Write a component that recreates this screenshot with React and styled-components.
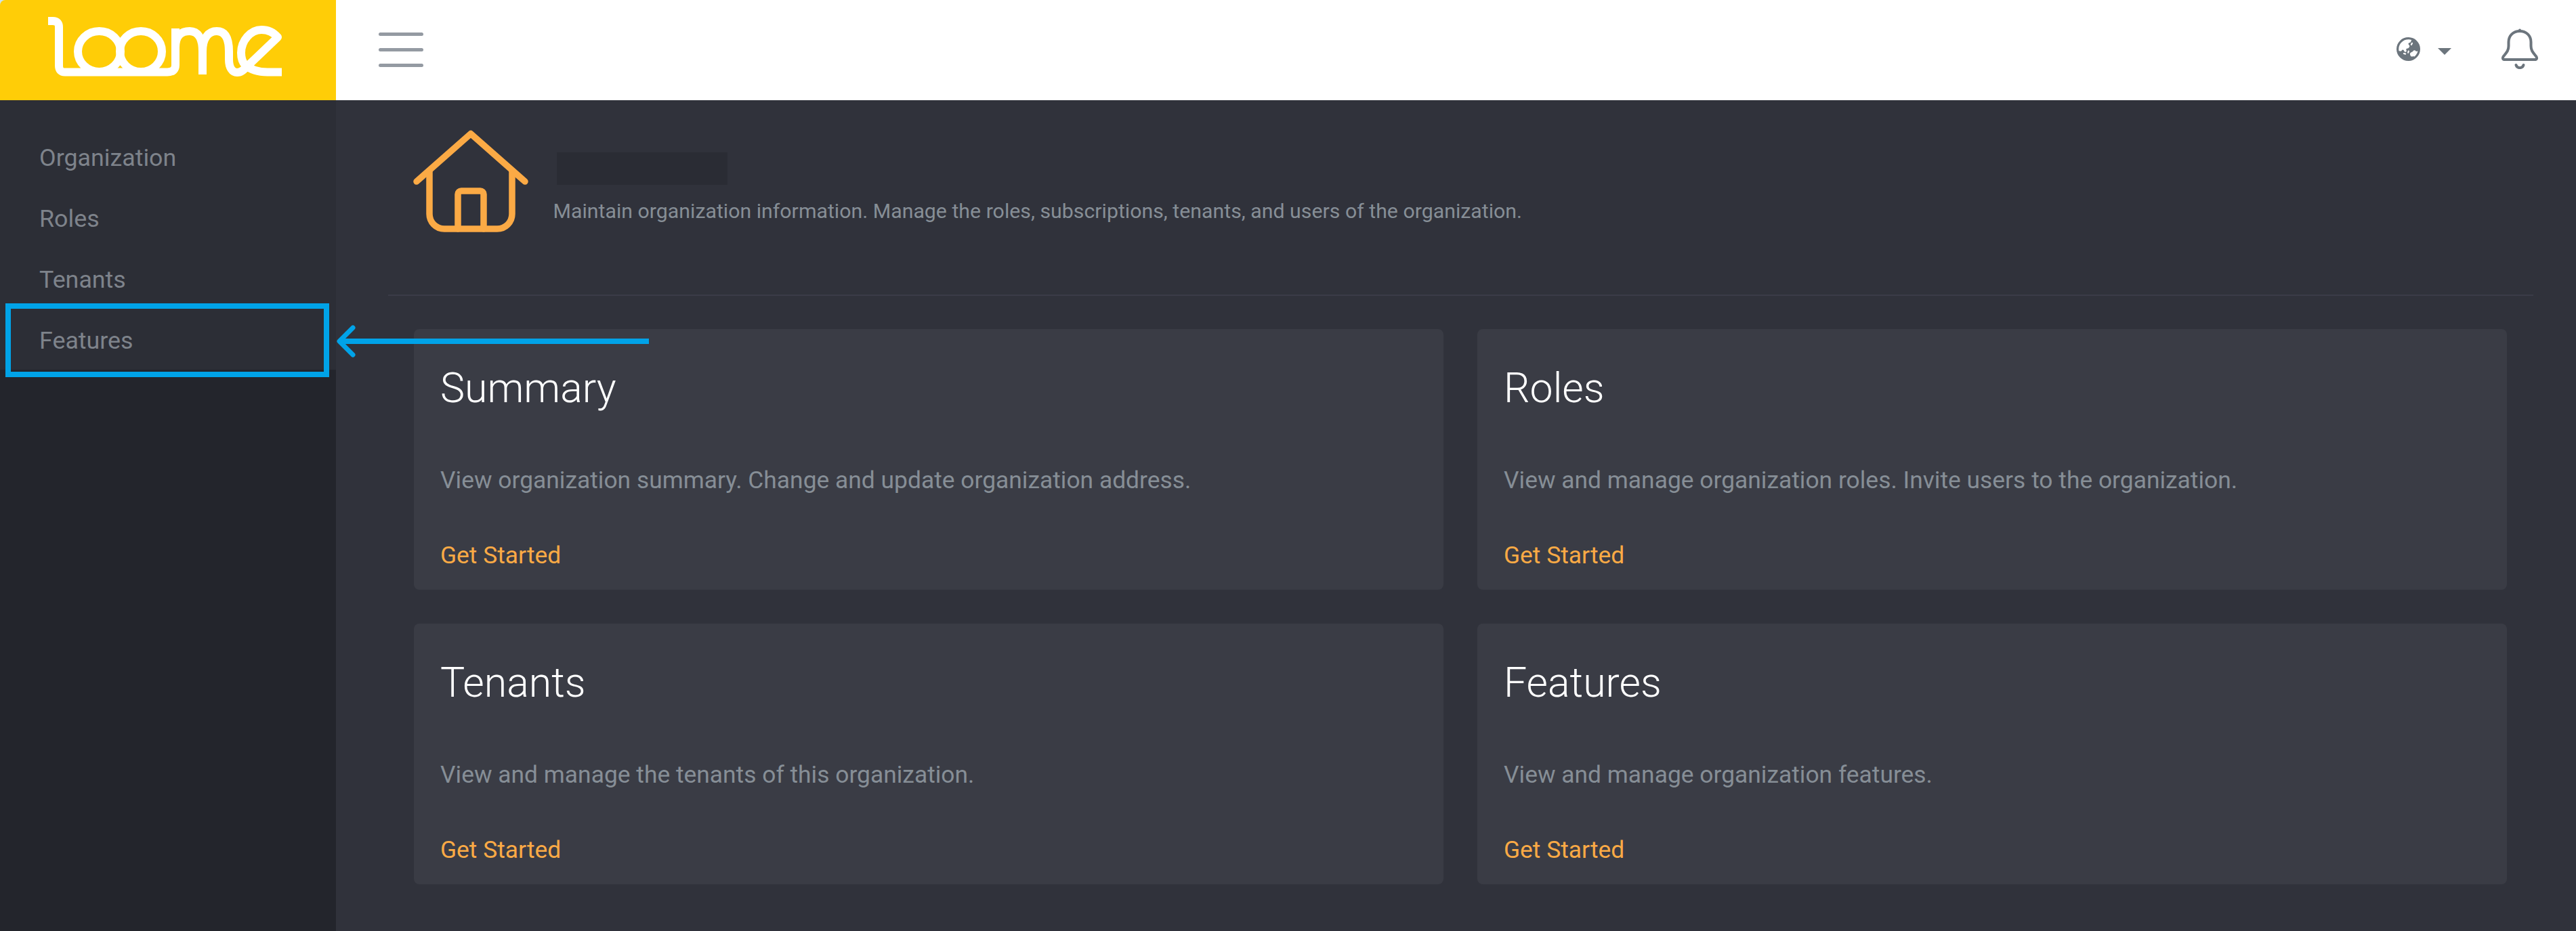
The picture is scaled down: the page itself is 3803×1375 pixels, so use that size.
import React from 'react';
import styled, { createGlobalStyle } from 'styled-components';
import { FaEarthAsia } from 'react-icons/fa6';

const Global = createGlobalStyle`
  html, body { margin: 0; padding: 0; background: #30323b; }
  body { font-family: Roboto, "Liberation Sans", sans-serif; overflow: hidden; }
  * { box-sizing: border-box; }
`;

const Page = styled.div`
  position: relative;
  width: 3803px;
  height: 1375px;
  display: grid;
  grid-template-columns: 496px 1fr;
  grid-template-rows: 148px 1fr;
  overflow: hidden;
  background: #cde4ee;
`;

const Brand = styled.div`
  background: #ffcd07;
  border-top-left-radius: 8px;
  padding: 25px 0 0 71px;
`;

const LogoMark = styled.svg`
  display: block;
  width: 345px;
  height: 88px;
`;

const TopBar = styled.header`
  background: #fff;
  display: flex;
  align-items: center;
  justify-content: space-between;
  padding: 0 56px 0 63px;
`;

const MenuButton = styled.button`
  display: flex;
  flex-direction: column;
  gap: 18px;
  width: 66px;
  padding: 0;
  margin: 0 0 2px;
  border: 0;
  background: none;
`;

const MenuBar = styled.span`
  display: block;
  height: 5px;
  border-radius: 3px;
  background: #949aa2;
`;

const TopActions = styled.div`
  display: flex;
  align-items: center;
`;

const GlobeIcon = styled(FaEarthAsia)`
  display: block;
  width: 35px;
  height: 35px;
  color: #6c757d;
  margin-bottom: 3px;
`;

const Caret = styled.span`
  width: 0;
  height: 0;
  margin: 4px 74px 0 26px;
  border-left: 10px solid transparent;
  border-right: 10px solid transparent;
  border-top: 10px solid #6c757d;
`;

const Bell = styled.svg`
  display: block;
  width: 54px;
  height: 60px;
  margin-top: -4px;
`;

const Sidebar = styled.nav`
  background: #23252c;
`;

const NavList = styled.div`
  padding-top: 40px;
  height: 398px;
  background: #2c2e36;
`;

const NavItem = styled.a`
  display: flex;
  align-items: center;
  height: 90px;
  padding-left: 58px;
  font-size: 35.8px;
  color: #7e838b;
`;

const Main = styled.main`
  padding: 0 63px 0 77px;
  background: #30323b;
`;

const PageHead = styled.section`
  display: flex;
  height: 289px;
  padding: 45px 0 0 37px;
  border-bottom: 2px solid #3b3c48;
`;

const HouseIcon = styled.svg`
  display: block;
  width: 170px;
  height: 150px;
  flex: none;
  overflow: visible;
`;

const HeadText = styled.div`
  padding: 32px 0 0 36.5px;
`;

const Redacted = styled.div`
  width: 252px;
  height: 48px;
  margin-left: 5.5px;
  background: #2a2c34;
`;

const Lead = styled.p`
  margin: 21px 0 0;
  font-size: 30.3px;
  line-height: 36px;
  color: #868e96;
  white-space: nowrap;
`;

const CardGrid = styled.section`
  display: grid;
  grid-template-columns: 1520px 1520px;
  grid-auto-rows: 385px;
  column-gap: 50px;
  row-gap: 50px;
  margin: 49px 0 0 38px;
`;

const Card = styled.article`
  display: flex;
  flex-direction: column;
  padding: 52px 39px 0;
  border-radius: 8px;
  background: #3a3c45;
`;

const CardTitle = styled.h3`
  margin: 0;
  font-size: 60.8px;
  line-height: 72px;
  font-weight: 300;
  color: #fff;
`;

const CardText = styled.p`
  margin: 78px 0 0;
  font-size: 35.4px;
  line-height: 42px;
  color: #868e96;
`;

const CardLink = styled.a`
  margin-top: 69px;
  font-size: 35.4px;
  line-height: 42px;
  color: #fbaa45;
`;

const Highlight = styled.div`
  position: absolute;
  left: 8px;
  top: 448px;
  width: 478px;
  height: 109px;
  border: 8px solid #00a3e8;
`;

const Pointer = styled.svg`
  position: absolute;
  left: 490px;
  top: 474px;
  width: 475px;
  height: 60px;
`;

const cards = [
  ['Summary', 'View organization summary. Change and update organization address.'],
  ['Roles', 'View and manage organization roles. Invite users to the organization.'],
  ['Tenants', 'View and manage the tenants of this organization.'],
  ['Features', 'View and manage organization features.'],
];

export default function App() {
  return (
    <Page>
      <Global />
      <Brand>
        <LogoMark viewBox="71 25 345 88" fill="none" stroke="#fff" strokeWidth="12">
          <path d="M71 31 H78 Q87 31 87 40 V97 Q87 106.5 96 106.5 H247 Q259 106.5 259 96 V42" />
          <ellipse cx="146.5" cy="76" rx="31.5" ry="30" />
          <ellipse cx="208" cy="76" rx="31" ry="30" />
          <path d="M259 70 C259 52 268 46 280 46 C292 46 299 56 299 76 V110" />
          <path d="M299 76 C299 56 308 46 320 46 C332 46 338 56 338 76 V88 C338 100 343 107 350 107 C356 107 360 103 366 97 L410 55 C404 48 396 44 386 44 C370 44 356 60 356 78 C356 86 358 92 362 96 C370 103 380 106.5 395 106.5 H416" strokeLinejoin="round" />
        </LogoMark>
      </Brand>
      <TopBar>
        <MenuButton aria-label="Menu">
          <MenuBar />
          <MenuBar />
          <MenuBar />
        </MenuButton>
        <TopActions>
          <GlobeIcon />
          <Caret />
          <Bell viewBox="0 0 54 60" fill="none" stroke="#6c757d" strokeWidth="4">
            <path d="M27 4 C17 4 10.5 11 10.5 20 V26 C10.5 33 7 36 3 41 C1 44 2 46 5 46 H49 C52 46 53 44 51 41 C47 36 43.5 33 43.5 26 V20 C43.5 11 37 4 27 4 Z" />
            <path d="M27 2.5 V4" strokeLinecap="round" />
            <path d="M21.5 54 C23 59.5 31 59.5 32.5 54" strokeLinecap="round" />
          </Bell>
        </TopActions>
      </TopBar>
      <Sidebar>
        <NavList>
          {['Organization', 'Roles', 'Tenants', 'Features'].map((item) => (
            <NavItem key={item}>{item}</NavItem>
          ))}
        </NavList>
      </Sidebar>
      <Main>
        <PageHead>
          <HouseIcon viewBox="610 193 170 150" fill="none" stroke="#fbaa45" strokeWidth="9.5" strokeLinecap="round" strokeLinejoin="round">
            <path d="M615 268 L695 197.5 L775 268" />
            <path d="M634 252 V316 A22 22 0 0 0 656 338 H734 A22 22 0 0 0 756 316 V252" />
            <path d="M676 338 V287 A5 5 0 0 1 681 282 H709 A5 5 0 0 1 714 287 V338" />
          </HouseIcon>
          <HeadText>
            <Redacted />
            <Lead>Maintain organization information. Manage the roles, subscriptions, tenants, and users of the organization.</Lead>
          </HeadText>
        </PageHead>
        <CardGrid>
          {cards.map(([title, text]) => (
            <Card key={title}>
              <CardTitle>{title}</CardTitle>
              <CardText>{text}</CardText>
              <CardLink>Get Started</CardLink>
            </Card>
          ))}
        </CardGrid>
      </Main>
      <Highlight />
      <Pointer viewBox="490 474 475 60" fill="none" stroke="#00a3e8">
        <path d="M958 504 H503" strokeWidth="8" />
        <path d="M521 484 L501 504 L521 524" strokeWidth="7" strokeLinecap="round" strokeLinejoin="round" />
      </Pointer>
    </Page>
  );
}
